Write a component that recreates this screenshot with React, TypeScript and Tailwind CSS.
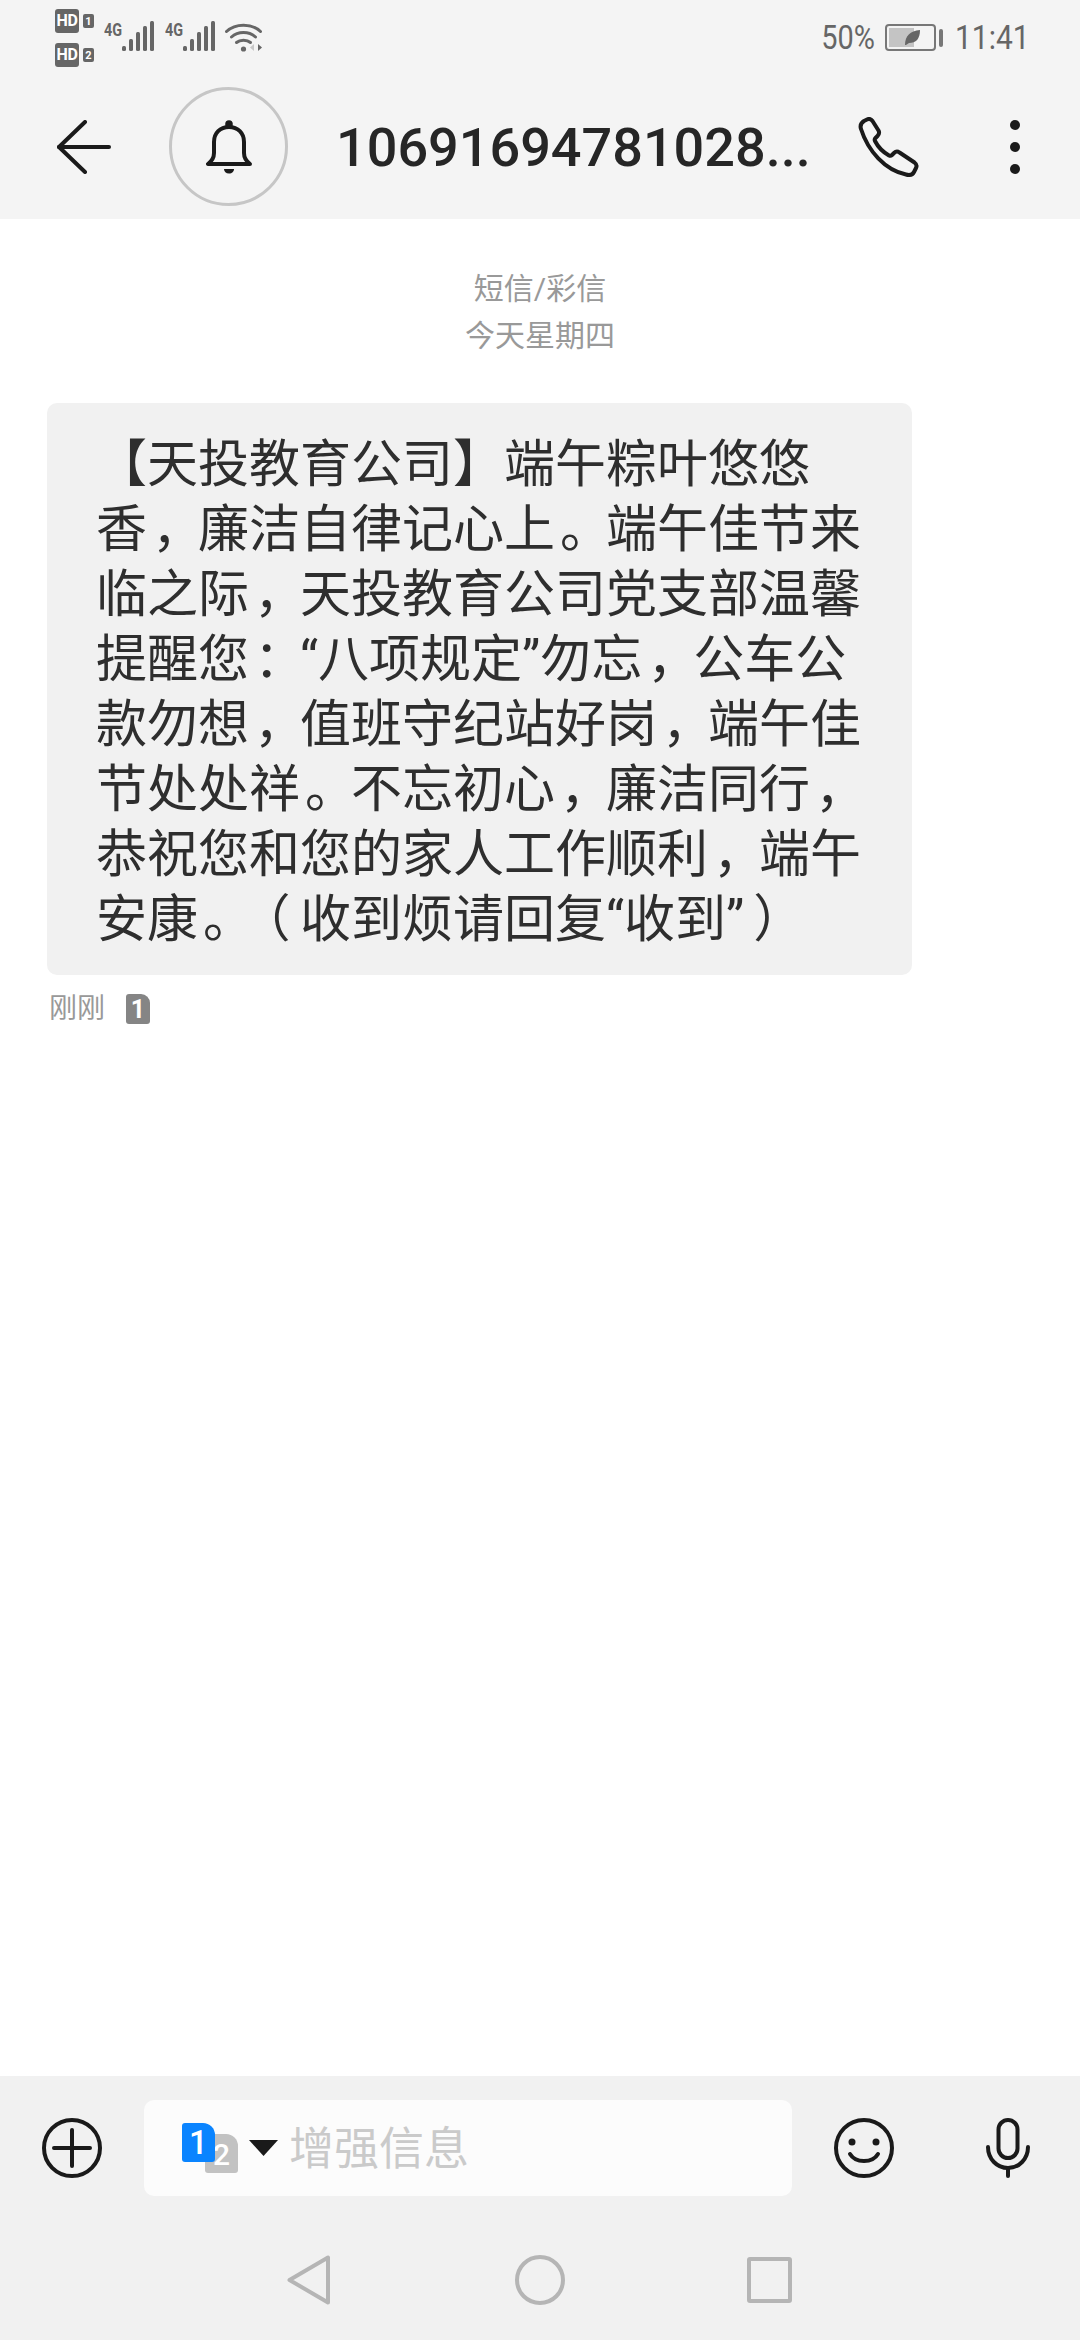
const messageLines = [
  "【天投教育公司】端午粽叶悠悠",
  "香，廉洁自律记心上。端午佳节来",
  "临之际，天投教育公司党支部温馨",
  "提醒您：“八项规定”勿忘，公车公",
  "款勿想，值班守纪站好岗，端午佳",
  "节处处祥。不忘初心，廉洁同行，",
  "恭祝您和您的家人工作顺利，端午",
  "安康。（收到烦请回复“收到”）",
];

// half-width glyph in a full-width box, so the padding can set where it sits
const punctBox = "inline-block w-[51px] [font-feature-settings:'halt']";

const MessageLine = ({ text }: { text: string }) => (
  <div className="whitespace-nowrap">
    {text.split(/([，。：（）])/).map((part, i) => {
      if (part === "（") {
        return (
          <span key={i} className={`${punctBox} pl-[16px]`}>
            {part}
          </span>
        );
      }
      if (part === "）") {
        return (
          <span key={i} className={`${punctBox} pl-[9px]`}>
            {part}
          </span>
        );
      }
      if (part === "，" || part === "。" || part === "：") {
        return (
          <span key={i} className={`${punctBox} pl-[5px]`}>
            {part}
          </span>
        );
      }
      return part;
    })}
  </div>
);

const HdRow = ({ n }: { n: string }) => (
  <div className="flex items-center gap-[4px]">
    <span className="flex h-[24px] w-[24px] items-center justify-center rounded-[3px] bg-[#666666] text-[16px] font-bold leading-none tracking-tight text-white">
      HD
    </span>
    <span className="flex h-[14px] w-[11px] items-center justify-center rounded-[2px] bg-[#666666] text-[11px] font-bold leading-none text-white">
      {n}
    </span>
  </div>
);

const Signal = () => (
  <div className="flex items-start">
    <span className="mt-[-1px] w-[18px] origin-left scale-x-[0.8] text-[18px] font-bold leading-[17px] text-[#666666]">4G</span>
    <svg width="32" height="30" viewBox="0 0 32 30" className="mt-[-1px]" fill="#666666">
      <rect x="0" y="25" width="4" height="5" rx="1.5" />
      <rect x="7" y="18" width="4" height="12" rx="1.5" />
      <rect x="14" y="11" width="4" height="19" rx="1.5" />
      <rect x="21" y="5" width="4" height="25" rx="1.5" />
      <rect x="28" y="0" width="4" height="30" rx="1.5" />
    </svg>
  </div>
);

const Wifi = () => (
  <svg width="38" height="30" viewBox="0 0 38 30" fill="none" stroke="#666666" strokeWidth="3" strokeLinecap="round">
    <path d="M1.5 9.5C10.5 1 26.5 1 35.5 9.5" />
    <path d="M6.5 15C13 9 24 9 30.5 15" />
    <path d="M11.5 20.5C15 17.5 22 17.5 25.5 20.5" />
    <circle cx="18.5" cy="27" r="2.6" fill="#666666" stroke="none" />
    <path d="M29 22v7l-4-3.500z" fill="#c8c8c8" stroke="none" />
    <path d="M33 22v7l4-3.500z" fill="#666666" stroke="none" />
  </svg>
);

const Battery = () => (
  <div className="flex items-center gap-[3px]">
    <div className="relative h-[27px] w-[51px] rounded-[4px] border-2 border-[#777777] p-[2px]">
      <div className="h-full w-[25px] bg-[#c4c4c4]" />
      <svg width="17" height="17" viewBox="0 0 17 17" className="absolute left-[17px] top-[3px]" fill="#666666">
        <path d="M1 16C1 7 6 2 16 1c0 9-4 13-11 13l-3 2z" />
      </svg>
    </div>
    <div className="h-[18px] w-[4px] rounded-[2px] bg-[#777777]" />
  </div>
);

const ArrowLeft = () => (
  <svg width="54" height="54" viewBox="0 0 54 54" fill="none" stroke="#1a1a1a" strokeWidth="4" strokeLinecap="round" strokeLinejoin="round">
    <path d="M28 2 2 27l26 25" />
    <path d="M2 27h50" />
  </svg>
);

const Bell = () => (
  <svg width="46" height="54" viewBox="0 0 46 54" fill="none" stroke="#1a1a1a" strokeWidth="4" strokeLinejoin="round">
    <circle cx="23" cy="4" r="3.800" fill="#1a1a1a" stroke="none" />
    <path d="M2 44h42c-4-3-6-6-6-11V22C38 13 32 7 23 7S8 13 8 22v11c0 5-2 8-6 11z" />
    <path d="M18 49h10c0 2.500-2 4.500-5 4.500s-5-2-5-4.500z" fill="#1a1a1a" stroke="none" />
  </svg>
);

const Phone = () => (
  <svg width="61" height="60" viewBox="0 0 61 60" fill="none" stroke="#1a1a1a" strokeWidth="4" strokeLinejoin="round">
    <path d="M3 12c-1-3 0-6 3-8l3-1.500c2-1 4-.5 5.500 1.500l6 9.500c1 2 .5 4-1 5.500l-2 2c-1 1-1 2-.5 3 3 6 8 11 14 14.500 1 .5 2 .5 3-.5l2-2c1.500-1.500 3.500-2 5.500-.5l15 10c2 1.500 2.500 3.500 1.500 5.500l-2 4c-1.500 3-4.500 3.500-8 2.500C27 53 10 34 3 12z" />
  </svg>
);

const Dots = () => (
  <div className="flex flex-col gap-[12px]">
    <div className="h-[10px] w-[10px] rounded-full bg-[#1a1a1a]" />
    <div className="h-[10px] w-[10px] rounded-full bg-[#1a1a1a]" />
    <div className="h-[10px] w-[10px] rounded-full bg-[#1a1a1a]" />
  </div>
);

const PlusCircle = () => (
  <svg width="60" height="60" viewBox="0 0 60 60" fill="none" stroke="#1a1a1a" strokeWidth="4" strokeLinecap="round">
    <circle cx="30" cy="30" r="28" />
    <path d="M12 30h36M30 12v36" />
  </svg>
);

const Smile = () => (
  <svg width="60" height="60" viewBox="0 0 60 60" fill="none" stroke="#1a1a1a" strokeWidth="4" strokeLinecap="round">
    <circle cx="30" cy="30" r="28" />
    <circle cx="18" cy="24" r="3.500" fill="#1a1a1a" stroke="none" />
    <circle cx="42" cy="24" r="3.500" fill="#1a1a1a" stroke="none" />
    <path d="M16 36c3 5 8 7 14 7s11-2 14-7" />
  </svg>
);

const Mic = () => (
  <svg width="44" height="60" viewBox="0 0 44 60" fill="none" stroke="#1a1a1a" strokeWidth="4" strokeLinecap="round">
    <rect x="12.500" y="2" width="19" height="38" rx="9.500" />
    <path d="M2 29c0 12 9 21 20 21s20-9 20-21" />
    <path d="M22 50v8" />
  </svg>
);

// sim picker in the input: blue 1 over grey 2
const SimPicker = () => (
  <div className="relative h-[50px] w-[56px]">
    <div className="absolute left-[23px] top-[11px] flex h-[39px] w-[33px] items-end justify-center rounded-[3px] rounded-tr-[12px] bg-[#c2c2c2] text-[30px] font-medium leading-[36px] text-white">
      2
    </div>
    <div className="absolute left-0 top-0 flex h-[39px] w-[33px] items-center justify-center rounded-[3px] rounded-tr-[12px] bg-[#0a84ff] text-[33px] font-medium leading-none text-white">
      1
    </div>
  </div>
);

export default function App() {
  return (
    <div className="flex h-[2340px] w-[1080px] flex-col overflow-hidden bg-white font-['Roboto','Noto_Sans_CJK_SC',sans-serif]">
      {/* status bar + title */}
      <header className="h-[219px] bg-[#f4f4f4]">
        <div className="flex h-[74px] items-start justify-between pl-[55px] pr-[55px]">
          <div className="flex items-start">
            <div className="mt-[9px] flex flex-col gap-[10px]">
              <HdRow n="1" />
              <HdRow n="2" />
            </div>
            <div className="ml-[10px] mt-[22px] flex gap-[11px]">
              <Signal />
              <Signal />
              <div className="ml-[-1px]">
                <Wifi />
              </div>
            </div>
          </div>
          <div className="mt-[24px] flex items-center text-[34px] leading-[27px] text-[#666666]">
            <span className="w-[62px] origin-right scale-x-[0.85] text-right">50%</span>
            <div className="ml-[11px]">
              <Battery />
            </div>
            <span className="ml-[12px] w-[70px] origin-left scale-x-[0.88] whitespace-nowrap">11:41</span>
          </div>
        </div>
        <div className="flex h-[145px] items-center pl-[57px]">
          <ArrowLeft />
          <div className="ml-[58px] flex h-[119px] w-[119px] items-center justify-center rounded-full border-[3px] border-[#c6c6c6]">
            <Bell />
          </div>
          <div className="ml-[48px] mt-[2px] w-[470px] whitespace-nowrap text-[54px] font-medium leading-none text-[#262626]">
            10691694781028...
          </div>
          <div className="ml-[52px]">
            <Phone />
          </div>
          <div className="ml-[91px]">
            <Dots />
          </div>
        </div>
      </header>

      {/* conversation */}
      <main className="flex-1 pl-[47px]">
        <div className="ml-[-47px] pt-[46px] text-center text-[30px] leading-[47px] text-[#999999]">
          <div>短信/彩信</div>
          <div>今天星期四</div>
        </div>
        <div className="mt-[44px] h-[572px] w-[865px] rounded-[10px] bg-[#f1f1f1] pl-[49px] pt-[29px] text-[51px] leading-[65px] text-[#2e2e2e]">
          {messageLines.map((line) => (
            <MessageLine key={line} text={line} />
          ))}
        </div>
        <div className="mt-[19px] flex items-center pl-[2px] text-[28px] leading-[30px] text-[#999999]">
          <span>刚刚</span>
          <span className="ml-[21px] flex h-[30px] w-[24px] items-center justify-center rounded-[3px] rounded-tr-[9px] bg-[#858585] text-[25px] font-bold leading-none text-white">
            1
          </span>
        </div>
      </main>

      {/* compose bar + system nav */}
      <footer className="h-[264px] bg-[#f1f1f1]">
        <div className="flex h-[120px] items-center pl-[42px] pt-[24px]">
          <PlusCircle />
          <div className="ml-[42px] flex h-[96px] w-[648px] items-start rounded-[10px] bg-[#fcfcfc] pl-[38px] pt-[23px]">
            <SimPicker />
            <svg width="29" height="16" viewBox="0 0 29 16" className="ml-[11px] mt-[17px]" fill="#1a1a1a">
              <path d="M0 0h29L14.500 16z" />
            </svg>
            <span className="ml-[11px] mt-[2px] text-[45px] leading-[50px] text-[#cacaca]">增强信息</span>
          </div>
          <div className="ml-[42px]">
            <Smile />
          </div>
          <div className="ml-[92px]">
            <Mic />
          </div>
        </div>
        <div className="flex items-center pl-[287px] pt-[59px]">
          <svg width="44" height="50" viewBox="0 0 44 50" fill="none" stroke="#b5b5b5" strokeWidth="4" strokeLinejoin="round">
            <path d="M41 2.500v45L2.500 25z" />
          </svg>
          <div className="ml-[184px] h-[50px] w-[50px] rounded-full border-[4px] border-[#b5b5b5]" />
          <div className="ml-[182px] h-[46px] w-[45px] rounded-[3px] border-[4px] border-[#b5b5b5]" />
        </div>
      </footer>
    </div>
  );
}
